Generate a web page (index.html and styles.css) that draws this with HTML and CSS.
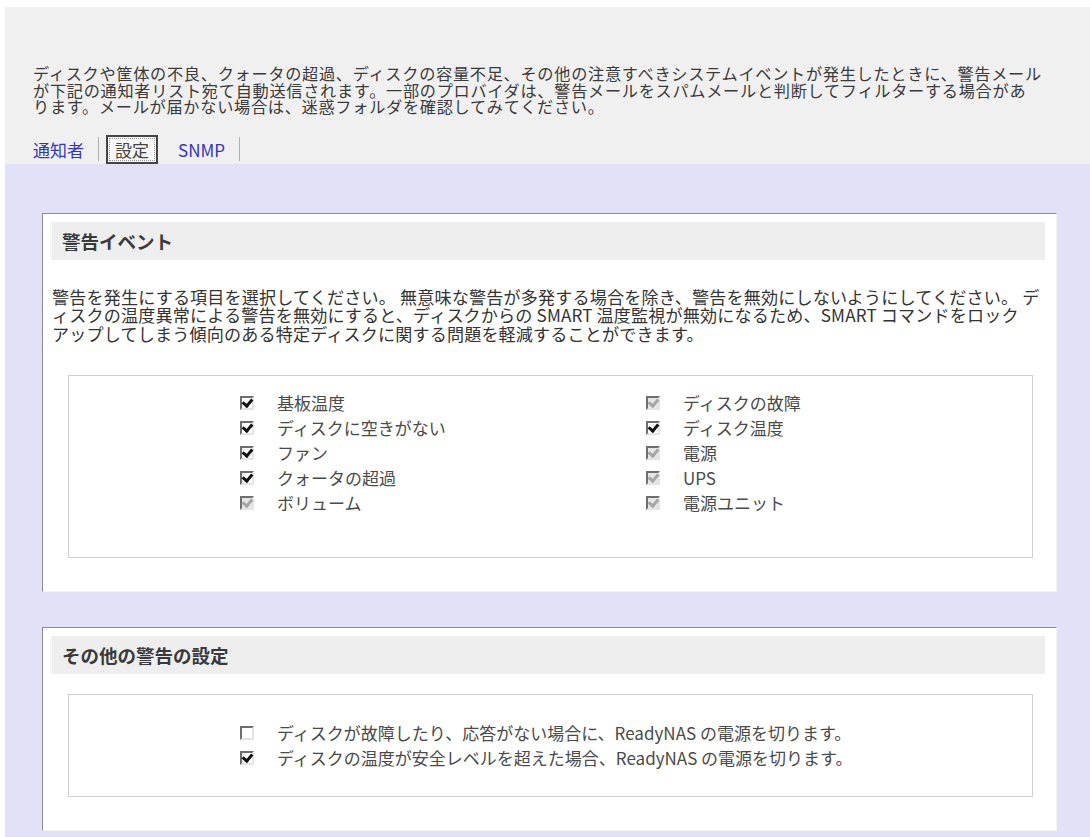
FILE: index.html
```html
<!DOCTYPE html>
<html lang="ja">
<head>
  <meta charset="UTF-8">
  <title>警告 - 設定</title>
  <link rel="stylesheet" href="styles.css">
</head>
<body>
  <section class="intro">
    <p class="intro-text">ディスクや筐体の不良、クォータの超過、ディスクの容量不足、その他の注意すべきシステムイベントが発生したときに、警告メール<br>が下記の通知者リスト宛て自動送信されます。一部のプロバイダは、警告メールをスパムメールと判断してフィルターする場合があ<br>ります。メールが届かない場合は、迷惑フォルダを確認してみてください。</p>
    <nav class="tabs">
      <a href="#notify" class="tab">通知者</a>
      <span class="sep"></span>
      <span class="tab current">設定</span>
      <a href="#snmp" class="tab">SNMP</a>
      <span class="sep"></span>
    </nav>
  </section>

  <main class="main">
    <section class="panel">
      <h3 class="panel-head">警告イベント</h3>
      <p class="desc">警告を発生にする項目を選択してください。 無意味な警告が多発する場合を除き、警告を無効にしないようにしてください。 デ<br>ィスクの温度異常による警告を無効にすると、ディスクからの SMART 温度監視が無効になるため、SMART コマンドをロック<br>アップしてしまう傾向のある特定ディスクに関する問題を軽減することができます。</p>
      <div class="box events">
        <label class="row"><span class="cb on"></span>基板温度</label>
        <label class="row"><span class="cb on dis"></span>ディスクの故障</label>
        <label class="row"><span class="cb on"></span>ディスクに空きがない</label>
        <label class="row"><span class="cb on"></span>ディスク温度</label>
        <label class="row"><span class="cb on"></span>ファン</label>
        <label class="row"><span class="cb on dis"></span>電源</label>
        <label class="row"><span class="cb on"></span>クォータの超過</label>
        <label class="row"><span class="cb on dis"></span>UPS</label>
        <label class="row"><span class="cb on dis"></span>ボリューム</label>
        <label class="row"><span class="cb on dis"></span>電源ユニット</label>
      </div>
    </section>

    <section class="panel">
      <h3 class="panel-head">その他の警告の設定</h3>
      <div class="box other">
        <label class="row"><span class="cb"></span>ディスクが故障したり、応答がない場合に、ReadyNAS の電源を切ります。</label>
        <label class="row"><span class="cb on"></span>ディスクの温度が安全レベルを超えた場合、ReadyNAS の電源を切ります。</label>
      </div>
    </section>
  </main>
</body>
</html>
```

FILE: styles.css
```css
body {
  margin: 0;
  padding: 7px 0 0 5px;
  background: #fff;
  font-family: "Noto Sans CJK JP", "Noto Sans", sans-serif;
  color: #333;
}
p, h3 {
  margin: 0;
}

/* top description + tabs */
.intro {
  background: #f0f0f0;
  padding: 58px 0 0 28px;
}
.intro-text {
  font-size: 16.2px;
  letter-spacing: 0.7px;
  line-height: 16.5px;
  white-space: nowrap;
  color: #3a3a3a;
}
.tabs {
  display: flex;
  align-items: center;
  margin-top: 20px;
  height: 29px;
}
.tab {
  font-size: 17px;
  color: #3434c4;
  text-decoration: none;
}
.tab.current {
  color: #444;
  border: 2px solid #444;
  background: #f6f6f6;
  padding: 0 7px;
  line-height: 25px;
  margin: 0 20px 0 7px;
  outline: 1px dotted #999;
  outline-offset: -4px;
}
.sep {
  width: 1px;
  height: 24px;
  background: #b0b0b0;
  margin-left: 14px;
}

/* lavender settings area */
.main {
  background: #e1e1f8;
  padding: 49px 33px 7px 37px;
  display: flex;
  flex-direction: column;
  gap: 35px;
}
.panel {
  background: #fff;
  border: 1px solid;
  border-color: #8c8c8c #f4f4f4 #f4f4f4 #8c8c8c;
  padding: 8px 11px 33px 7px;
}
.panel-head {
  background: #eeeeee;
  border-left: 2px solid #f8f8f8;
  height: 38px;
  line-height: 38px;
  padding-left: 10px;
  font-size: 18.5px;
  font-weight: 700;
  color: #3a3a3a;
}
.desc {
  margin: 28px 0 0 2px;
  font-size: 17.1px;
  letter-spacing: 0.15px;
  line-height: 18.5px;
  white-space: nowrap;
}
.box {
  border: 1px solid #cfcfcf;
  margin: 32px 12px 0 18px;
}
.events {
  display: grid;
  grid-template-columns: 406px 1fr;
  padding: 14px 0 42px 171px;
}
.other {
  margin-top: 20px;
  padding: 25px 0 26px 171px;
}
.row {
  display: flex;
  align-items: center;
  height: 25px;
  font-size: 17px;
  color: #4a4a4a;
  white-space: nowrap;
}

/* classic windows checkbox */
.cb {
  position: relative;
  box-sizing: border-box;
  width: 14px;
  height: 14px;
  border: 2px solid;
  border-color: #6e6e6e #e4e4e4 #e4e4e4 #6e6e6e;
  background: #fff;
  margin-right: 23px;
  flex: none;
}
.cb.on::after {
  content: "";
  position: absolute;
  left: 2px;
  top: -1px;
  width: 4px;
  height: 7px;
  border: solid #111;
  border-width: 0 3px 3px 0;
  transform: rotate(40deg);
}
.cb.dis {
  background: #e6e6e6;
}
.cb.dis::after {
  border-color: #a6a6a6;
}
```
